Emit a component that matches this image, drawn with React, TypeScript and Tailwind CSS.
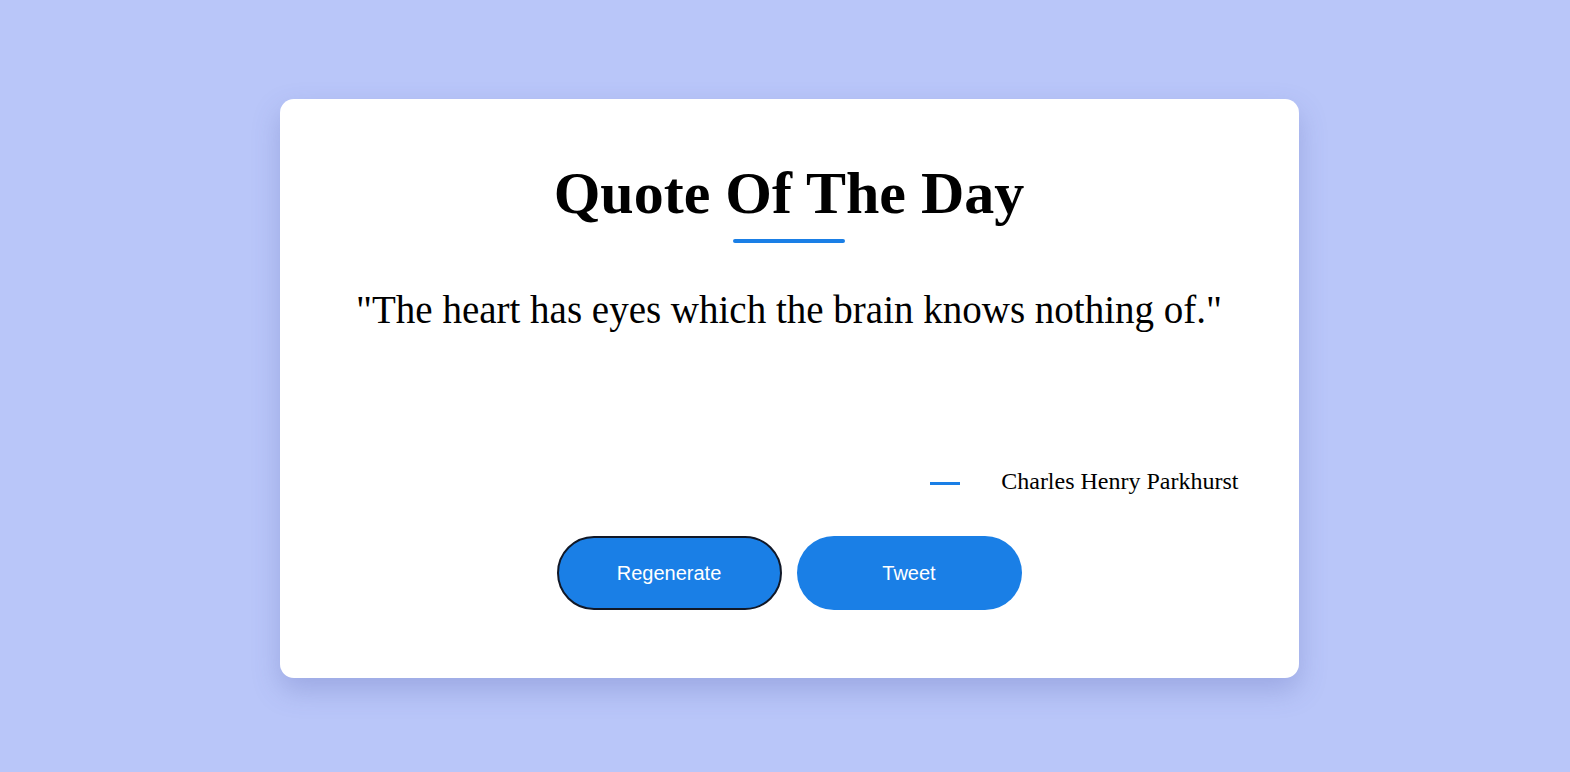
import React from "react";

const App = () => {
  return (
    <div className="min-h-screen w-full bg-[#b9c6f9] flex items-center justify-center">
      <div className="ml-[8px] mt-[4px] w-[1019px] bg-white rounded-[14px] shadow-[0_12px_28px_rgba(80,90,170,0.28)] pt-[64px] pb-[68px] px-[60px] flex flex-col items-center">
        <h1 className="font-['Liberation_Serif',serif] font-bold text-[60px] leading-none text-black">
          Quote Of The Day
        </h1>
        <div className="mt-[16px] h-[4px] w-[112px] rounded-full bg-[#1a7fe6]" />

        <p className="mt-[47px] font-['Liberation_Serif',serif] text-[39px] leading-none text-black text-center">
          "The heart has eyes which the brain knows nothing of."
        </p>

        <div className="mt-[140px] w-full flex justify-end items-center gap-[41px]">
          <span className="block h-[3px] w-[30px] bg-[#1a7fe6] mt-[5px]" />
          <span className="font-['Liberation_Serif',serif] text-[24px] leading-none text-black">
            Charles Henry Parkhurst
          </span>
        </div>

        <div className="mt-[43px] flex gap-[15px]">
          <button className="w-[225px] h-[74px] rounded-full bg-[#1a7fe6] border-2 border-[#111827] text-white text-[20px] font-['Liberation_Sans',Arial,sans-serif]">
            Regenerate
          </button>
          <button className="w-[225px] h-[74px] rounded-full bg-[#1a7fe6] text-white text-[20px] font-['Liberation_Sans',Arial,sans-serif]">
            Tweet
          </button>
        </div>
      </div>
    </div>
  );
};

export default App;
